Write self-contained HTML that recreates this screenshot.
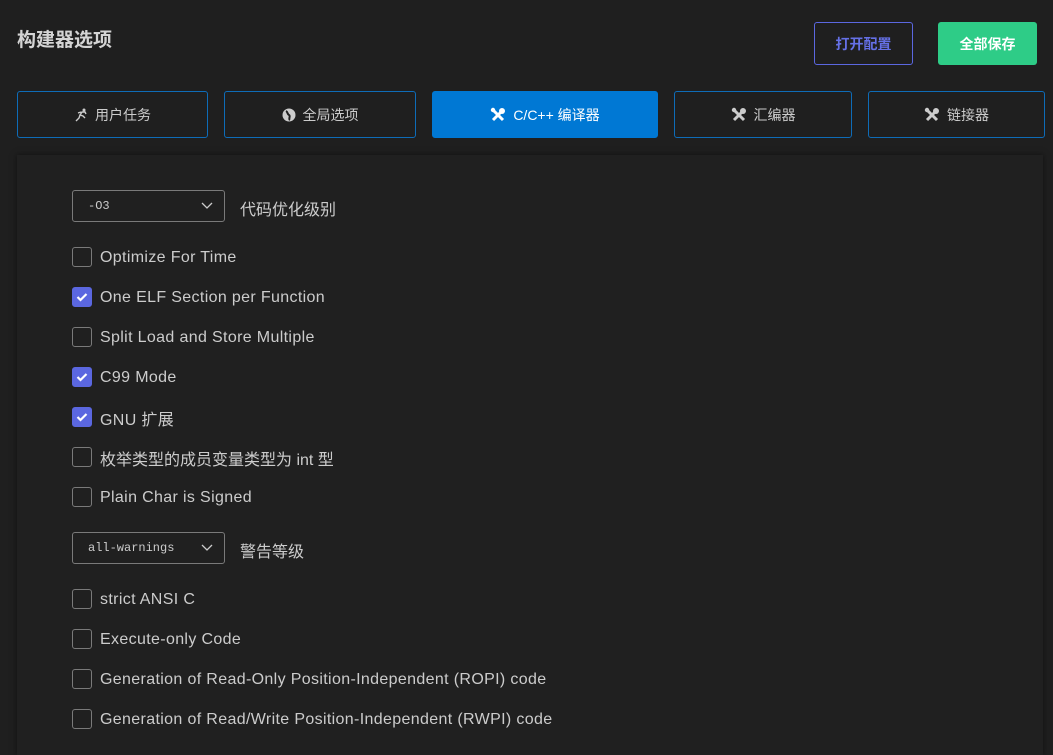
<!DOCTYPE html>
<html><head><meta charset="utf-8"><style>
*{box-sizing:border-box;margin:0;padding:0}
body{width:1053px;height:749px;background:#1f1f1f;font-family:"Liberation Sans","Noto Sans CJK SC",sans-serif;color:#cccccc;position:relative;overflow:hidden}
h1{position:absolute;left:17px;top:25px;font-size:19px;font-weight:bold;color:#d4d4d4}
.btn{position:absolute;display:flex;align-items:center;justify-content:center;border-radius:3px;font-size:14px;font-weight:bold}
.tab{position:absolute;top:91px;height:47px;border:1px solid #0e6cb8;border-radius:3px;display:flex;align-items:center;justify-content:center;font-size:14px;color:#ccc;gap:7px}
.tab.act{background:#0078d4;border-color:#0078d4;color:#fff}
.panel{position:absolute;left:17px;top:155px;width:1026px;height:600px;background:#202020;box-shadow:0 0 6px rgba(0,0,0,.5)}
.sel{position:absolute;left:72px;width:153px;height:32px;border:1px solid #7a7a7a;border-radius:3px;font-family:"Liberation Mono",monospace;font-size:12px;color:#ccc;padding-left:15px;line-height:30px}
.sel svg{position:absolute;right:11px;top:11px}
.lbl{position:absolute;left:240px;font-size:16px}
.row{position:absolute;left:72px;height:20px;display:flex;align-items:center;font-size:16px;color:#cccccc;letter-spacing:0.35px}
.row span{position:relative;top:1px}
.cb{width:20px;height:20px;border:1px solid #7a7a7a;border-radius:3px;margin-right:8px;display:flex;align-items:center;justify-content:center;flex:none}
.cb.on{background:#5b67e0;border-color:#5b67e0}
</style></head><body>
<h1>构建器选项</h1>
<div class="btn" style="left:814px;top:22px;width:99px;height:43px;border:1px solid #5b67e0;color:#6570e6">打开配置</div>
<div class="btn" style="left:938px;top:22px;width:99px;height:43px;background:#2ecc87;color:#fff">全部保存</div>

<div class="tab" style="left:17px;width:191px"><svg width="14" height="14" viewBox="0 0 14 14"><circle cx="10" cy="2" r="1.5" fill="#ccc"/><path d="M2 13l3-3 1-3 3 1 2 2M6 7l2-3h3l1 2M4 5l3-1" stroke="#ccc" stroke-width="1.4" fill="none"/></svg>用户任务</div>
<div class="tab" style="left:224px;width:192px"><svg width="14" height="14" viewBox="0 0 14 14"><circle cx="7" cy="7" r="6.5" fill="#ccc"/><path d="M4 3c2 1 1 3 3 4s-1 4 1 5" stroke="#1f1f1f" stroke-width="2" fill="none"/></svg>全局选项</div>
<div class="tab act" style="left:432px;width:226px"><svg width="16" height="16" viewBox="0 0 16 16"><path d="M3 3l10 10" stroke="#fff" stroke-width="3"/><path d="M13 3L3 13" stroke="#fff" stroke-width="3"/><circle cx="12" cy="4" r="3" fill="#fff"/><circle cx="3" cy="3" r="2.2" fill="#fff"/></svg>C/C++ 编译器</div>
<div class="tab" style="left:674px;width:178px"><svg width="16" height="16" viewBox="0 0 16 16"><path d="M3 3l10 10" stroke="#ccc" stroke-width="3"/><path d="M13 3L3 13" stroke="#ccc" stroke-width="3"/><circle cx="12" cy="4" r="3" fill="#ccc"/><circle cx="3" cy="3" r="2.2" fill="#ccc"/></svg>汇编器</div>
<div class="tab" style="left:868px;width:177px"><svg width="16" height="16" viewBox="0 0 16 16"><path d="M3 3l10 10" stroke="#ccc" stroke-width="3"/><path d="M13 3L3 13" stroke="#ccc" stroke-width="3"/><circle cx="12" cy="4" r="3" fill="#ccc"/><circle cx="3" cy="3" r="2.2" fill="#ccc"/></svg>链接器</div>

<div class="panel"></div>
<div class="sel" style="top:190px">-O3<svg width="12" height="8" viewBox="0 0 12 8"><path d="M1 1l5 5 5-5" stroke="#ccc" fill="none" stroke-width="1.3"/></svg></div>
<div class="lbl" style="top:196px">代码优化级别</div>

<div class="row" style="top:247px"><div class="cb"></div><span>Optimize For Time</span></div>
<div class="row" style="top:287px"><div class="cb on"><svg width="12" height="10" viewBox="0 0 12 10"><path d="M1.5 5l3 3 6-6" stroke="#fff" stroke-width="2.2" fill="none"/></svg></div><span>One ELF Section per Function</span></div>
<div class="row" style="top:327px"><div class="cb"></div><span>Split Load and Store Multiple</span></div>
<div class="row" style="top:367px"><div class="cb on"><svg width="12" height="10" viewBox="0 0 12 10"><path d="M1.5 5l3 3 6-6" stroke="#fff" stroke-width="2.2" fill="none"/></svg></div><span>C99 Mode</span></div>
<div class="row" style="top:407px"><div class="cb on"><svg width="12" height="10" viewBox="0 0 12 10"><path d="M1.5 5l3 3 6-6" stroke="#fff" stroke-width="2.2" fill="none"/></svg></div><span>GNU 扩展</span></div>
<div class="row" style="top:447px;letter-spacing:0"><div class="cb"></div><span>枚举类型的成员变量类型为 int 型</span></div>
<div class="row" style="top:487px"><div class="cb"></div><span>Plain Char is Signed</span></div>

<div class="sel" style="top:532px">all-warnings<svg width="12" height="8" viewBox="0 0 12 8"><path d="M1 1l5 5 5-5" stroke="#ccc" fill="none" stroke-width="1.3"/></svg></div>
<div class="lbl" style="top:538px">警告等级</div>

<div class="row" style="top:589px"><div class="cb"></div><span>strict ANSI C</span></div>
<div class="row" style="top:629px"><div class="cb"></div><span>Execute-only Code</span></div>
<div class="row" style="top:669px"><div class="cb"></div><span>Generation of Read-Only Position-Independent (ROPI) code</span></div>
<div class="row" style="top:709px"><div class="cb"></div><span>Generation of Read/Write Position-Independent (RWPI) code</span></div>
</body></html>
